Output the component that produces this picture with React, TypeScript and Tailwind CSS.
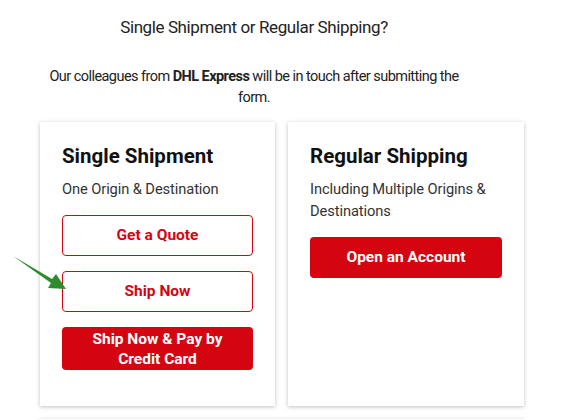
import React from "react";

const font = { fontFamily: 'Roboto, "Liberation Sans", sans-serif' };

export default function App() {
  return (
    <div className="relative w-[581px] h-[420px] overflow-hidden bg-white text-[#333]" style={font}>
      <div className="w-[484px] ml-[40px]">
        <div className="w-[428px] pt-[14px] text-center">
          <h1 className="text-[17px] leading-[26px] text-[#222] tracking-[-0.4px]">Single Shipment or Regular Shipping?</h1>
          <p className="mt-[26px] text-[14.5px] leading-[21px] text-[#222] tracking-[-0.55px]">
            Our colleagues from <b className="font-bold">DHL Express</b> will be in touch after submitting the form.
          </p>
        </div>
        <div className="mt-[14px] flex gap-[13px]">
          <div className="w-[235px] h-[284px] bg-white shadow-[0_1px_4px_rgba(0,0,0,0.25)] px-[22px] pt-[20px]">
            <h2 className="text-[20.5px] font-bold leading-[28px] text-[#111]">Single Shipment</h2>
            <p className="mt-[8px] text-[14.7px] leading-[22px] tracking-[-0.1px]">One Origin &amp; Destination</p>
            <div className="mt-[15px] flex flex-col gap-[15px]">
              <button className="h-[41px] w-full rounded-[4px] border border-[#d40511] text-[#d40511] text-[15.5px] font-bold">Get a Quote</button>
              <button className="h-[41px] w-full rounded-[4px] border border-[#d40511] text-[#d40511] text-[15.5px] font-bold">Ship Now</button>
              <button className="h-[43px] w-full rounded-[4px] bg-[#d40511] text-white text-[15.5px] font-bold leading-[20px] px-[20px]">Ship Now &amp; Pay by Credit Card</button>
            </div>
          </div>
          <div className="w-[236px] h-[284px] bg-white shadow-[0_1px_4px_rgba(0,0,0,0.25)] px-[22px] pt-[20px]">
            <h2 className="text-[20.5px] font-bold leading-[28px] text-[#111]">Regular Shipping</h2>
            <p className="mt-[8px] text-[14.7px] leading-[22px] tracking-[-0.1px]">Including Multiple Origins &amp; Destinations</p>
            <div className="mt-[15px]">
              <button className="h-[41px] w-full rounded-[4px] bg-[#d40511] text-white text-[15.5px] font-bold">Open an Account</button>
            </div>
          </div>
        </div>
        <div className="mt-[13px] h-[40px] w-[484px] bg-white shadow-[0_1px_4px_rgba(0,0,0,0.25)]" />
      </div>
      <svg className="absolute left-0 top-0" width="581" height="420" viewBox="0 0 581 420" pointerEvents="none">
        <polygon points="13,256 52,279 56,274 66,289 48,288 51,283" fill="#2e8b2e" />
      </svg>
    </div>
  );
}
